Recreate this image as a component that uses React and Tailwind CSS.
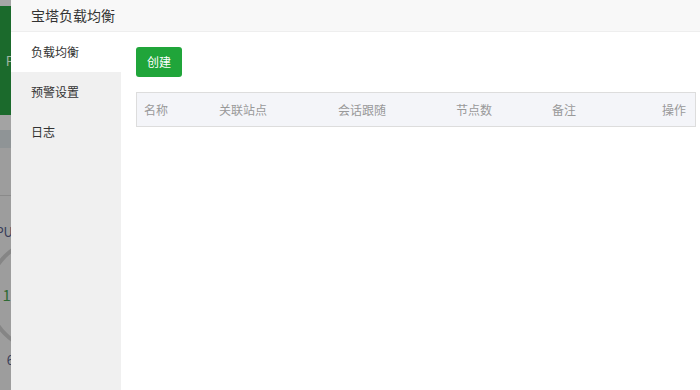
const font = { fontFamily: '"Microsoft YaHei", "Noto Sans CJK SC", "Liberation Sans", sans-serif' };

const columns = [
  { label: "名称", w: "w-[75px]" },
  { label: "关联站点", w: "w-[119px]" },
  { label: "会话跟随", w: "w-[118px]" },
  { label: "节点数", w: "w-[96px]" },
  { label: "备注", w: "flex-1" },
];

const navItems = ["负载均衡", "预警设置", "日志"];

// dimmed page peeking out behind the layer
const BackdropStrip = () => (
  <div className="relative w-[11px] h-full flex flex-col bg-[#9d9d9d] overflow-hidden shrink-0">
    <div className="h-[6px] bg-[#a6a6a6]" />
    <div className="h-[109px] bg-[#1b6a2c] flex items-center justify-end">
      <span className="text-[13px] text-[#9fb6a3] -mr-[3px]">P</span>
    </div>
    <div className="h-[15px] bg-[#a3a3a3]" />
    <div className="h-[18px] bg-[#8f9496]" />
    <div className="h-[48px] bg-[#9d9d9d] border-b border-[#8a8a8a]" />
    <div className="h-[42px] flex items-end justify-end">
      <span className="text-[13px] text-[#3a3f5a] -mr-[2px] leading-none">PU</span>
    </div>
    <div className="h-[46px]" />
    <div className="h-[20px] flex items-center justify-end">
      <span className="text-[15px] text-[#2e6b34] -mr-[4px] leading-none">1.</span>
    </div>
    <div className="h-[45px]" />
    <div className="h-[20px] flex items-center justify-end">
      <span className="text-[13px] text-[#3a3f5a] -mr-[3px] leading-none">6</span>
    </div>
    <div className="absolute left-[-13px] top-[238px] w-[114px] h-[114px] rounded-full border-[4px] border-[#858585]" />
  </div>
);

export default function App() {
  return (
    <div className="w-[700px] h-[390px] flex overflow-hidden bg-white" style={font}>
      <BackdropStrip />
      <div className="flex-1 flex flex-col min-w-0">
        <div className="h-[32px] shrink-0 bg-[#f8f8f8] border-b border-[#eeeeee] flex items-center pl-[20px] text-[14px] text-[#333]">
          宝塔负载均衡
        </div>
        <div className="flex-1 flex min-h-0">
          <div className="w-[110px] bg-[#f0f0f0] flex flex-col shrink-0">
            {navItems.map((item, i) => (
              <div
                key={item}
                className={
                  "h-[40px] flex items-center pl-[20px] text-[12px] text-[#333] " +
                  (i === 0 ? "bg-white" : "")
                }
              >
                {item}
              </div>
            ))}
          </div>
          <div className="flex-1 pl-[15px] pr-[4px] pt-[15px]">
            <button className="h-[30px] w-[46px] bg-[#20a53a] rounded-[3px] text-white text-[12px] flex items-center justify-center">
              创建
            </button>
            <div className="mt-[15px] h-[35px] bg-[#f4f5f9] border border-[#dddddd] flex items-center pl-[7px] pr-[9px] text-[12px] text-[#999]">
              {columns.map((c) => (
                <div key={c.label} className={c.w}>
                  {c.label}
                </div>
              ))}
              <div className="text-right">操作</div>
            </div>
          </div>
        </div>
      </div>
    </div>
  );
}
